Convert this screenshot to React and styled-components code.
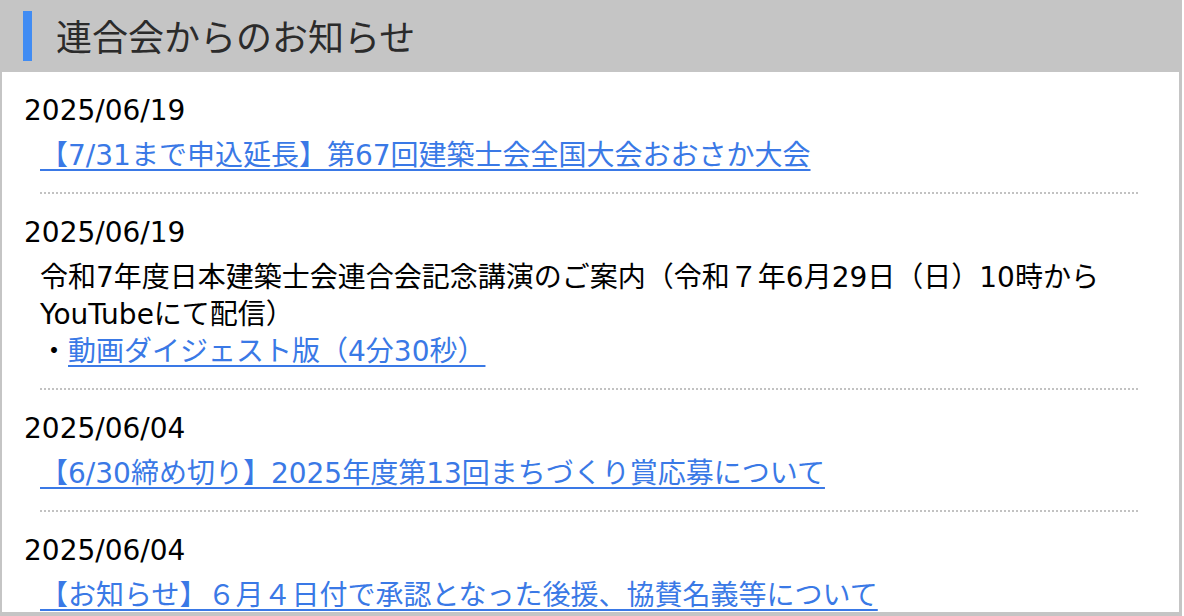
import React from "react";
import styled, { createGlobalStyle } from "styled-components";

const Global = createGlobalStyle`
  html, body { margin: 0; padding: 0; background: #fff; }
  body { font-family: "DejaVu Sans", "Noto Sans CJK JP", sans-serif; }
`;

const Box = styled.section`
  box-sizing: border-box;
  width: 1182px;
  height: 616px;
  overflow: hidden;
  border-left: 2px solid #c5c5c5;
  border-right: 3px solid #c5c5c5;
  border-bottom: 4px solid #c5c5c5;
  background: #fff;
`;

const Header = styled.header`
  height: 72px;
  background: #c5c5c5;
  display: flex;
  align-items: center;
  gap: 24px;
  padding-left: 23px;
  margin-left: -2px;
`;

const Bar = styled.span`
  display: block;
  width: 9px;
  height: 50px;
  background: #418cf3;
`;

const Title = styled.h2`
  margin: 0;
  font-family: "Noto Sans CJK JP", sans-serif;
  font-size: 36px;
  font-weight: 400;
  line-height: 1;
  color: #2b2b2b;
  padding-bottom: 2px;
`;

const List = styled.dl`
  margin: 0;
  padding: 20px 41px 0 22px;
  font-size: 28px;
  line-height: 37px;
  color: #000;
`;

const Date = styled.dt`
  margin: ${(p) => (p.$first ? "0" : "20px")} 0 0 0;
  height: 37px;
`;

const Body = styled.dd`
  margin: 8px 0 0 16px;
  padding-bottom: ${(p) => (p.$last ? "0" : "18px")};
  border-bottom: ${(p) => (p.$last ? "none" : "2px dotted #c2c2c2")};
`;

const Line = styled.div`
  height: 37px;
  white-space: nowrap;
`;

const Link = styled.a`
  color: #3a79e6;
  text-decoration: underline;
  text-decoration-thickness: 2px;
  text-underline-offset: 4px;
  cursor: pointer;
`;

const items = [
  {
    date: "2025/06/19",
    lines: [<Link>【7/31まで申込延長】第67回建築士会全国大会おおさか大会</Link>],
  },
  {
    date: "2025/06/19",
    lines: [
      "令和7年度日本建築士会連合会記念講演のご案内（令和７年6月29日（日）10時から",
      "YouTubeにて配信）",
      <>
        ・<Link>動画ダイジェスト版（4分30秒）</Link>
      </>,
    ],
  },
  {
    date: "2025/06/04",
    lines: [<Link>【6/30締め切り】2025年度第13回まちづくり賞応募について</Link>],
  },
  {
    date: "2025/06/04",
    lines: [<Link>【お知らせ】６月４日付で承認となった後援、協賛名義等について</Link>],
  },
];

export default function App() {
  return (
    <>
      <Global />
      <Box>
        <Header>
          <Bar />
          <Title>連合会からのお知らせ</Title>
        </Header>
        <List>
          {items.map((it, i) => (
            <React.Fragment key={i}>
              <Date $first={i === 0}>{it.date}</Date>
              <Body $last={i === items.length - 1}>
                {it.lines.map((l, j) => (
                  <Line key={j}>{l}</Line>
                ))}
              </Body>
            </React.Fragment>
          ))}
        </List>
      </Box>
    </>
  );
}
